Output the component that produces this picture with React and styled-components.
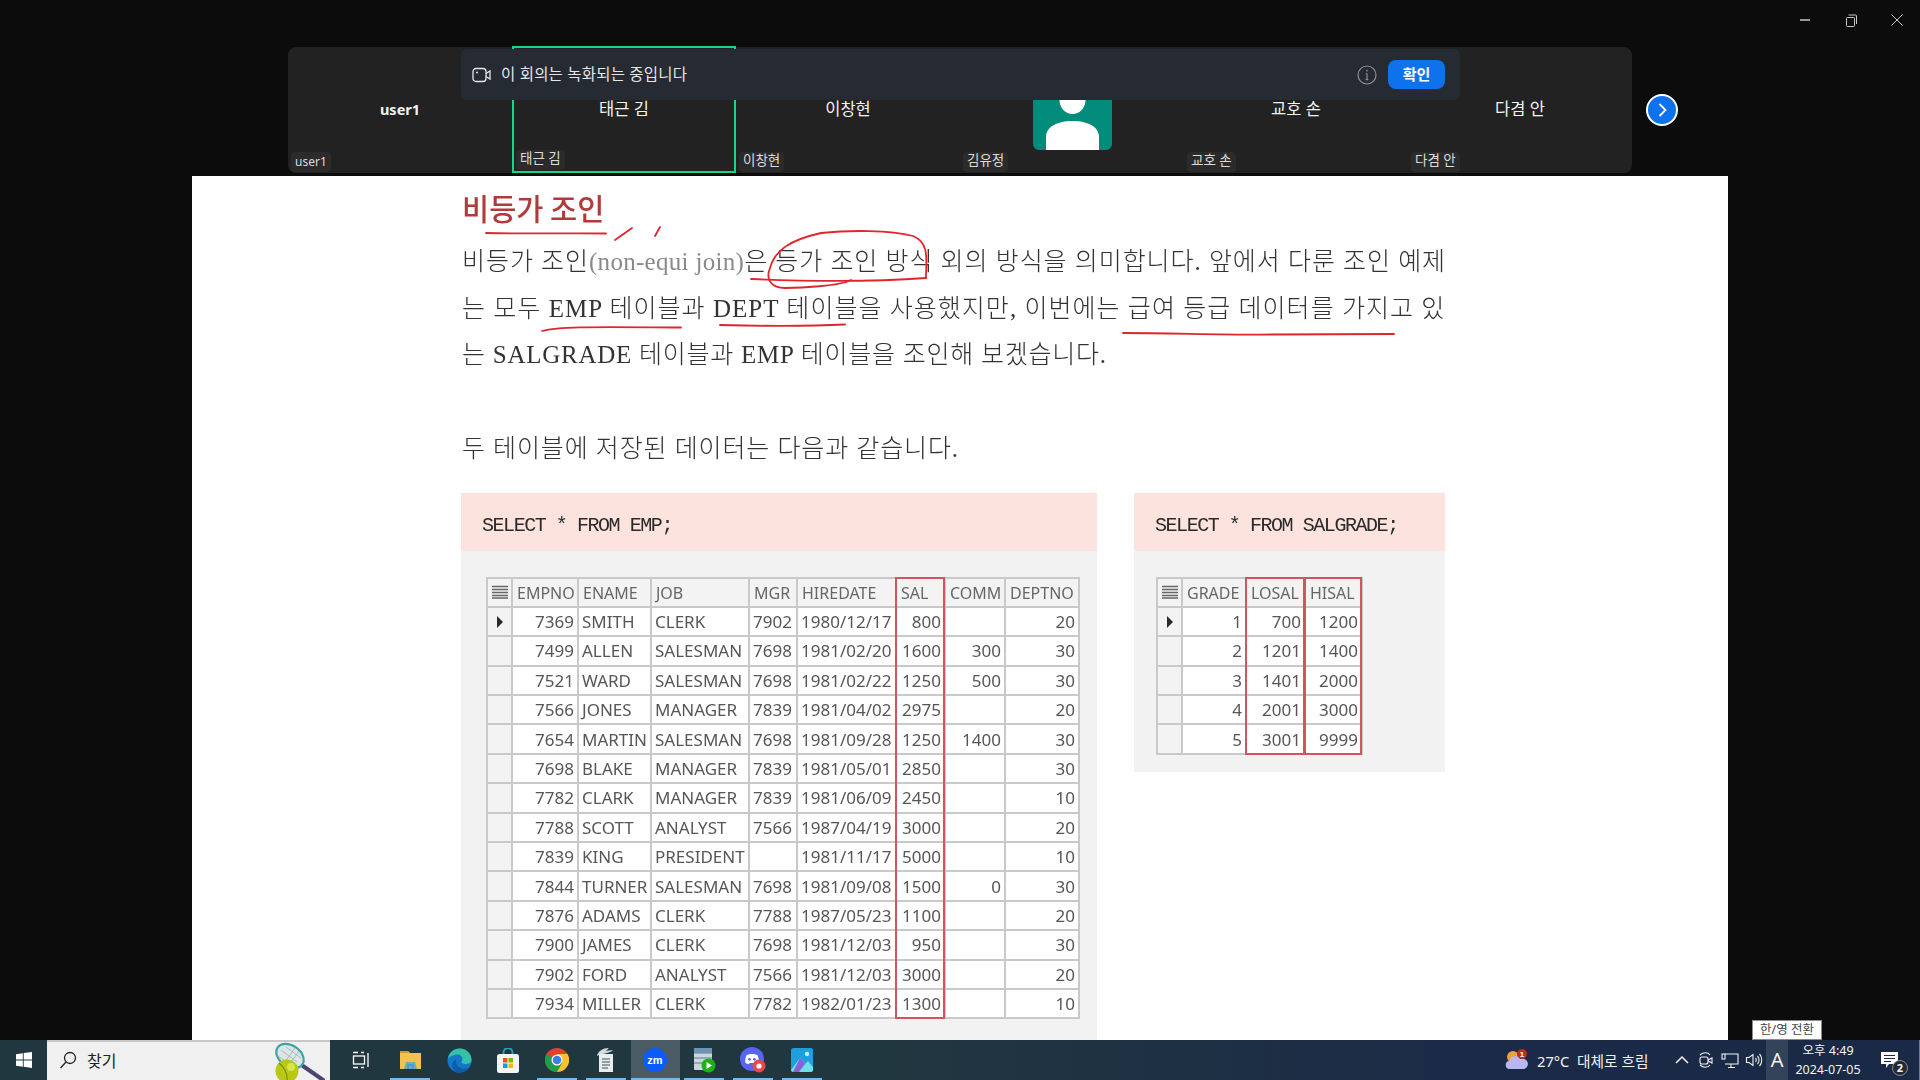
import React from "react";
import styled, { createGlobalStyle } from "styled-components";

const GlobalStyle = createGlobalStyle`
  html, body {
    margin: 0;
    padding: 0;
    background: #0c0c0c;
    overflow: hidden;
  }
  * {
    box-sizing: border-box;
  }
`;

const UI_FONT = `"Noto Sans", "Noto Sans CJK KR", sans-serif`;

const Screen = styled.div`
  width: 1920px;
  height: 1080px;
  display: flex;
  flex-direction: column;
  position: relative;
  overflow: hidden;
  background: #0c0c0c;
  font-family: ${UI_FONT};
`;

const TitleBar = styled.div`
  height: 47px;
  display: flex;
  justify-content: flex-end;
  align-items: flex-start;
`;

const WinButton = styled.div`
  width: 46px;
  height: 40px;
  display: flex;
  align-items: center;
  justify-content: center;
  color: #c8c8c8;
`;

const StageRow = styled.div`
  height: 126px;
  padding-left: 288px;
  display: flex;
  align-items: center;
  gap: 14px;
`;

const Strip = styled.div`
  position: relative;
  width: 1344px;
  height: 126px;
  display: grid;
  grid-template-columns: repeat(6, 224px);
  background: #222222;
  border-radius: 8px;
`;

const Tile = styled.div`
  position: relative;
  display: flex;
  justify-content: center;
  padding-top: ${(p) => (p.$active ? "49px" : "50px")};
  margin-top: ${(p) => (p.$active ? "-1px" : "0")};
  border: ${(p) => (p.$active ? "2px solid #12d98a" : "none")};
  align-items: ${(p) => (p.$avatar ? "center" : "flex-start")};
  ${(p) => p.$avatar && "padding-top: 0;"}
`;

const TileName = styled.div`
  color: #f2f2f2;
  font-size: ${(p) => (p.$bold ? "14.5px" : "16.5px")};
  line-height: 24px;
  font-weight: ${(p) => (p.$bold ? 700 : 400)};
`;

const TileLabel = styled.div`
  position: absolute;
  left: ${(p) => (p.$active ? "2px" : "3px")};
  bottom: 1px;
  height: 20px;
  padding: 0 4px;
  border-radius: 4px;
  background: #2b2b2b;
  color: #dcdcdc;
  font-size: ${(p) => (p.$latin ? "12px" : "13.5px")};
  line-height: ${(p) => (p.$latin ? "20px" : "17px")};
`;

const Avatar = styled.div`
  width: 79px;
  height: 79px;
  border-radius: 6px;
  overflow: hidden;
  background: #008b7b;
  display: flex;
`;

const Banner = styled.div`
  position: absolute;
  z-index: 3;
  left: 173px;
  right: 172px;
  top: 2px;
  height: 51px;
  padding: 0 15px 0 11px;
  display: flex;
  align-items: center;
  border-radius: 6px;
  background: #252a33;
  color: #e4e6ea;
  font-size: 15.5px;
`;

const BannerText = styled.span`
  margin: -2px 0 0 9px;
  flex: 1;
  letter-spacing: 0.2px;
`;

const ConfirmButton = styled.div`
  width: 57px;
  height: 29px;
  margin-left: 11px;
  border-radius: 8px;
  background: #0e72ed;
  color: #ffffff;
  font-size: 15px;
  font-weight: 700;
  line-height: 29px;
  text-align: center;
`;

const NextButton = styled.div`
  width: 32px;
  height: 32px;
  border-radius: 50%;
  border: 2px solid #ffffff;
  background: #0e72ed;
  display: flex;
  align-items: center;
  justify-content: center;
  color: #ffffff;
`;

const Page = styled.main`
  position: relative;
  width: 1536px;
  height: 864px;
  margin: 3px 0 0 192px;
  padding: 8px 0 0 269px;
  background: #ffffff;
  overflow: hidden;
  filter: blur(0.55px);
`;

const Heading = styled.h2`
  margin: 0 0 9px 1px;
  color: #b23a3a;
  font-size: 29.5px;
  line-height: 46px;
  font-weight: 500;
  font-family: "Noto Sans CJK KR", sans-serif;
`;

const Paragraph = styled.p`
  margin: 0 0 ${(p) => p.$after || "0"} 1px;
  color: #333333;
  font-family: "Liberation Serif", "Noto Sans CJK KR", serif;
  font-size: 25px;
  font-weight: 300;
  line-height: 46.7px;
`;

const Line = styled.span`
  display: block;
  white-space: nowrap;
  letter-spacing: ${(p) => p.$spacing || "0"};
`;

const Aside = styled.span`
  color: #8a8a8a;
  font-size: 25px;
  letter-spacing: 0.3px;
`;

const PanelRow = styled.div`
  display: flex;
  gap: 37px;
  align-items: flex-start;
`;

const Panel = styled.section`
  width: ${(p) => p.$width}px;
  height: ${(p) => p.$height}px;
  background: #f2f2f3;
  flex: none;
`;

const PanelHead = styled.div`
  height: 58px;
  padding-left: 21px;
  background: #fce3de;
  color: #2a2a2a;
  font-family: "Liberation Mono", monospace;
  font-size: 20px;
  letter-spacing: -1.45px;
  line-height: 66px;
`;

const TableWrap = styled.div`
  position: relative;
  width: ${(p) => p.$width}px;
  margin: 26px 0 0 ${(p) => p.$left}px;
`;

const Grid = styled.table`
  width: 100%;
  table-layout: fixed;
  border-collapse: collapse;
  background: #ffffff;
  color: #565656;
  font-family: "Noto Sans", sans-serif;
  font-size: 17px;
`;

const Cell = styled.td`
  height: 29.4px;
  padding: 1px 3px 0;
  border: 2px solid #c9c9c9;
  line-height: 24px;
  white-space: nowrap;
  overflow: hidden;
  text-align: ${(p) => (p.$right ? "right" : "left")};
`;

const HeadCell = styled(Cell).attrs({ as: "th" })`
  background: #f3f3f3;
  font-weight: 400;
  font-size: 16px;
  color: #666666;
  padding-left: 4px;
`;

const MarkerCell = styled(Cell)`
  background: #f3f3f3;
  padding: 0;
  text-align: center;
`;

const ColumnFrame = styled.div`
  position: absolute;
  top: 0;
  bottom: 0;
  border: 2px solid #cf5660;
  pointer-events: none;
`;

const Scribbles = styled.svg`
  position: absolute;
  inset: 0;
  pointer-events: none;
`;

const Taskbar = styled.footer`
  height: 40px;
  display: flex;
  align-items: stretch;
  background: linear-gradient(90deg, #21373f 0%, #21373f 45%, #1b2b47 75%, #1a2a46 100%);
  color: #f2f2f2;
`;

const StartButton = styled.div`
  width: 48px;
  display: flex;
  align-items: center;
  justify-content: center;
`;

const SearchBox = styled.div`
  position: relative;
  width: 288px;
  display: flex;
  align-items: center;
  gap: 10px;
  padding: 0 0 2px 12px;
  background: #f0f0f0;
  border-top: 2px solid #c8c8c8;
  color: #222222;
  font-size: 16px;
`;

const Mascot = styled.svg`
  position: absolute;
  left: 224px;
  top: 0;
`;

const TaskList = styled.div`
  display: flex;
  width: 539px;
  padding-left: 7px;
`;

const TaskItem = styled.div`
  position: relative;
  width: 49px;
  display: flex;
  align-items: center;
  justify-content: center;
  background: ${(p) => (p.$active ? "#4b5b63" : "transparent")};
  &::after {
    content: "";
    position: absolute;
    left: ${(p) => (p.$active ? "0" : "4px")};
    right: ${(p) => (p.$active ? "0" : "5px")};
    bottom: 0;
    height: 2px;
    background: ${(p) => (p.$running ? "#76b9ed" : "transparent")};
  }
`;

const Tray = styled.div`
  flex: 1;
  display: flex;
  align-items: center;
  padding-left: 646px;
`;

const Weather = styled.div`
  display: flex;
  align-items: center;
  gap: 8px;
  width: 165px;
  font-size: 14.7px;
  white-space: nowrap;
`;

const TrayIcon = styled.div`
  width: 24px;
  height: 40px;
  display: flex;
  align-items: center;
  justify-content: center;
`;

const ImeButton = styled.div`
  width: 22px;
  height: 40px;
  margin-left: 0;
  background: #33435a;
  font-size: 20px;
  line-height: 40px;
  text-align: center;
`;

const Clock = styled.div`
  width: 80px;
  text-align: center;
  font-size: 12.5px;
  line-height: 19px;
`;

const Notify = styled.div`
  position: relative;
  margin-left: 12px;
  width: 24px;
  height: 40px;
  display: flex;
  align-items: center;
`;

const NotifyBadge = styled.div`
  position: absolute;
  left: 12px;
  top: 20px;
  width: 16px;
  height: 16px;
  border-radius: 50%;
  border: 1px solid #888888;
  background: #222a33;
  font-size: 11px;
  font-weight: 700;
  line-height: 14px;
  text-align: center;
`;

const TrayEdge = styled.div`
  width: 1px;
  height: 40px;
  margin-left: 15px;
  background: #6d7a8c;
`;

const ImeTip = styled.div`
  position: absolute;
  left: 1752px;
  top: 1020px;
  width: 70px;
  height: 20px;
  border: 1px solid #8a8a8a;
  background: #ffffff;
  color: #444444;
  font-size: 12.5px;
  line-height: 18px;
  text-align: center;
  white-space: nowrap;
`;

const tiles = [
  { name: "user1", bold: true },
  { name: "태근 김", active: true },
  { name: "이창현" },
  { name: "김유정", avatar: true },
  { name: "교호 손" },
  { name: "다겸 안" },
];

const empColumns = [
  ["EMPNO", 66, true],
  ["ENAME", 73],
  ["JOB", 98],
  ["MGR", 48],
  ["HIREDATE", 99],
  ["SAL", 49, true],
  ["COMM", 60, true],
  ["DEPTNO", 74, true],
];

const empRows = [
  ["7369", "SMITH", "CLERK", "7902", "1980/12/17", "800", "", "20"],
  ["7499", "ALLEN", "SALESMAN", "7698", "1981/02/20", "1600", "300", "30"],
  ["7521", "WARD", "SALESMAN", "7698", "1981/02/22", "1250", "500", "30"],
  ["7566", "JONES", "MANAGER", "7839", "1981/04/02", "2975", "", "20"],
  ["7654", "MARTIN", "SALESMAN", "7698", "1981/09/28", "1250", "1400", "30"],
  ["7698", "BLAKE", "MANAGER", "7839", "1981/05/01", "2850", "", "30"],
  ["7782", "CLARK", "MANAGER", "7839", "1981/06/09", "2450", "", "10"],
  ["7788", "SCOTT", "ANALYST", "7566", "1987/04/19", "3000", "", "20"],
  ["7839", "KING", "PRESIDENT", "", "1981/11/17", "5000", "", "10"],
  ["7844", "TURNER", "SALESMAN", "7698", "1981/09/08", "1500", "0", "30"],
  ["7876", "ADAMS", "CLERK", "7788", "1987/05/23", "1100", "", "20"],
  ["7900", "JAMES", "CLERK", "7698", "1981/12/03", "950", "", "30"],
  ["7902", "FORD", "ANALYST", "7566", "1981/12/03", "3000", "", "20"],
  ["7934", "MILLER", "CLERK", "7782", "1982/01/23", "1300", "", "10"],
];

const gradeColumns = [
  ["GRADE", 64, true],
  ["LOSAL", 59, true],
  ["HISAL", 57, true],
];

const gradeRows = [
  ["1", "700", "1200"],
  ["2", "1201", "1400"],
  ["3", "1401", "2000"],
  ["4", "2001", "3000"],
  ["5", "3001", "9999"],
];

const MARKER_WIDTH = 25;

const ListGlyph = () => (
  <svg width="18" height="14" viewBox="0 0 18 14" style={{ display: "block", margin: "auto" }}>
    <path d="M1 1.5h16M1 4.5h16M1 7.5h16M1 10.5h16M1 13h16" stroke="#666" strokeWidth="1.6" />
  </svg>
);

const RowArrow = () => (
  <svg width="8" height="14" viewBox="0 0 8 14" style={{ display: "block", margin: "auto" }}>
    <path d="M1 1l6 6-6 6z" fill="#2a2a2a" />
  </svg>
);

function DataGrid({ columns, rows, frames }) {
  const total = MARKER_WIDTH + columns.reduce((sum, c) => sum + c[1], 0);
  return (
    <TableWrap $width={total} $left={frames.left}>
      <Grid>
        <colgroup>
          <col style={{ width: MARKER_WIDTH }} />
          {columns.map((c) => (
            <col key={c[0]} style={{ width: c[1] }} />
          ))}
        </colgroup>
        <thead>
          <tr>
            <HeadCell style={{ padding: 0 }}>
              <ListGlyph />
            </HeadCell>
            {columns.map((c) => (
              <HeadCell key={c[0]}>{c[0]}</HeadCell>
            ))}
          </tr>
        </thead>
        <tbody>
          {rows.map((row, i) => (
            <tr key={row[0]}>
              <MarkerCell>{i === 0 && <RowArrow />}</MarkerCell>
              {row.map((value, j) => (
                <Cell key={columns[j][0]} $right={columns[j][2]}>
                  {value}
                </Cell>
              ))}
            </tr>
          ))}
        </tbody>
      </Grid>
      {frames.names.map((name) => {
        const index = columns.findIndex((c) => c[0] === name);
        const left = MARKER_WIDTH + columns.slice(0, index).reduce((sum, c) => sum + c[1], 0);
        return <ColumnFrame key={name} style={{ left, width: columns[index][1] + 1 }} />;
      })}
    </TableWrap>
  );
}

const VideoIcon = () => (
  <svg width="20" height="16" viewBox="0 0 20 16" fill="none" stroke="#e6e6e6" strokeWidth="1.3">
    <rect x="1" y="1.5" width="13" height="13" rx="3" />
    <circle cx="5" cy="5.5" r="1" fill="#e6e6e6" stroke="none" />
    <path d="M14 6.5l4-2.5v8l-4-2.5" />
  </svg>
);

const InfoIcon = () => (
  <svg width="20" height="20" viewBox="0 0 20 20" fill="none" stroke="#8b8f96" strokeWidth="1.2">
    <circle cx="10" cy="10" r="9" />
    <path d="M10 8.5v6M8.6 14.6h2.8M8.8 8.5H10" />
    <circle cx="10" cy="5.6" r="0.9" fill="#8b8f96" stroke="none" />
  </svg>
);

const PersonArt = () => (
  <svg width="79" height="79" viewBox="0 0 79 79">
    <ellipse cx="39.5" cy="29" rx="13" ry="14" fill="#fff" />
    <path d="M13 79V66c0-10 11-16 26.500-16S66 56 66 66v13z" fill="#fff" />
  </svg>
);

const WindowsLogo = () => (
  <svg width="16" height="16" viewBox="0 0 16 16" fill="#fff">
    <path d="M0 2.300l6.800-1v6.300H0zM7.700 1.100L16 0v7.600H7.700zM0 8.500h6.800v6.300L0 13.800zM7.700 8.500H16V16l-8.300-1.200z" />
  </svg>
);

const SearchGlass = () => (
  <svg width="18" height="18" viewBox="0 0 18 18" fill="none" stroke="#222" strokeWidth="1.300">
    <circle cx="11" cy="7" r="5.500" />
    <path d="M7 11l-5.500 6" />
  </svg>
);

const RacketArt = () => (
  <Mascot width="56" height="40" viewBox="0 0 56 40">
    <path d="M32 24l20 14" stroke="#4d4470" strokeWidth="4" strokeLinecap="round" />
    <ellipse cx="19" cy="14" rx="15" ry="10.500" transform="rotate(35 19 14)" fill="#dbe6e6" stroke="#3fa3a8" strokeWidth="2.200" />
    <path d="M10 8l16 12M15 5l15 11M7 14l14 10M14 20l10-14M19 22L28 9" stroke="#9fb2b5" strokeWidth="0.800" />
    <circle cx="16" cy="29" r="11.500" fill="#b8c814" />
    <path d="M8 21c6 5 9 11 8 19" fill="none" stroke="#7d8c0a" strokeWidth="1.200" />
    <circle cx="20" cy="25" r="4" fill="#d9e64a" />
  </Mascot>
);

const TaskViewIcon = () => (
  <svg width="20" height="20" viewBox="0 0 20 20" fill="none" stroke="#fff" strokeWidth="1.300">
    <rect x="2.500" y="6" width="11" height="8" />
    <path d="M2 2.500h5M10 2.500h3M2 17.500h5M10 17.500h3M17 3v14" />
  </svg>
);

const FolderIcon = () => (
  <svg width="23" height="20" viewBox="0 0 23 20">
    <path d="M1 1h8l2 2h11v16H1z" fill="#f2c14e" />
    <path d="M1 1h8l2 2H1z" fill="#d9952a" />
    <path d="M8 19v-5h7v5h-2v-3h-3v3z" fill="#3b8fc9" />
    <path d="M5 19l2-7h9l2 7z" fill="#4aa3df" opacity="0.75" />
  </svg>
);

const EdgeIcon = () => (
  <svg width="25" height="25" viewBox="0 0 25 25">
    <circle cx="12.500" cy="12.500" r="12" fill="#1478c8" />
    <path d="M1 11C2 4 7 .5 12.500.5 19 .5 24.500 5 24.500 12c0 3-3 4-6 4-2 0-4-.5-4-2 0-1 1-1.500 1-3 0-3-3-5-6-4.500C5 7 2 9 1 11z" fill="#35c1a6" />
    <path d="M9 24C4 20 4 13 9.500 11c-1.500 3 0 8 6 9.500 3 .7 5-.5 6-1.500-2.500 5-8 6.500-12.500 5.500z" fill="#0c5aa8" />
  </svg>
);

const StoreIcon = () => (
  <svg width="24" height="25" viewBox="0 0 24 25">
    <path d="M7.500 7V4.500a4.500 4.500 0 0 1 9 0V7" fill="none" stroke="#23a9c8" strokeWidth="1.800" />
    <rect x="1" y="6" width="22" height="19" rx="2.500" fill="#f4f4f4" />
    <rect x="7" y="10" width="4.500" height="4.500" fill="#f25022" />
    <rect x="12.500" y="10" width="4.500" height="4.500" fill="#7fba00" />
    <rect x="7" y="15.500" width="4.500" height="4.500" fill="#00a4ef" />
    <rect x="12.500" y="15.500" width="4.500" height="4.500" fill="#ffb900" />
  </svg>
);

const ChromeIcon = () => (
  <svg width="24" height="24" viewBox="0 0 24 24">
    <circle cx="12" cy="12" r="12" fill="#e3402f" />
    <path d="M12 12L1.600 6A12 12 0 0 0 12 24l6-10.400z" fill="#1f9d4c" />
    <path d="M12 6h10.400A12 12 0 0 1 12 24l5.200-9z" fill="#fbc02d" />
    <circle cx="12" cy="12" r="5.500" fill="#fff" />
    <circle cx="12" cy="12" r="4.300" fill="#3d7fe6" />
  </svg>
);

const ScriptIcon = () => (
  <svg width="24" height="26" viewBox="0 0 24 26">
    <path d="M5 7h14v18H5z" fill="#e8eef0" />
    <path d="M8 12h8M8 15h8M8 18h8M8 21h6" stroke="#3e4f57" strokeWidth="1.200" />
    <path d="M3 9C4 4 9 1 15 1c-2 1.500-1 2-4 3 3 0 5-1 8-1-3 3-7 3-10 4-2 .5-4 1-6 2z" fill="#d5dcdf" />
  </svg>
);

const ZoomIcon = () => (
  <svg width="24" height="24" viewBox="0 0 24 24">
    <circle cx="12" cy="12" r="12" fill="#0b5cff" />
    <text x="12" y="16" textAnchor="middle" fill="#fff" fontSize="11" fontWeight="700" fontFamily="Liberation Sans, sans-serif">
      zm
    </text>
  </svg>
);

const ReportIcon = () => (
  <svg width="24" height="26" viewBox="0 0 24 26">
    <rect x="2" y="1" width="18" height="22" rx="1" fill="#c9d6de" />
    <path d="M2 6h18M2 11h18M2 16h18" stroke="#5e7d96" strokeWidth="1.200" />
    <rect x="2" y="1" width="18" height="5" fill="#6f93b0" />
    <circle cx="16.500" cy="18.500" r="7" fill="#19b313" />
    <path d="M14.500 15l5.500 3.500-5.500 3.500z" fill="#fff" />
  </svg>
);

const DiscordIcon = () => (
  <svg width="26" height="26" viewBox="0 0 26 26">
    <circle cx="12" cy="12" r="12" fill="#5865f2" />
    <path d="M6.500 8c3-1.500 8-1.500 11 0 1 2.500 1.500 5 1.300 7.500-1.300 1-2.600 1.500-3.600 1.700l-.8-1.300h-4.800l-.8 1.300c-1-.2-2.300-.7-3.600-1.700C5 13 5.500 10.500 6.500 8z" fill="#fff" />
    <circle cx="9.500" cy="12.300" r="1.400" fill="#5865f2" />
    <circle cx="14.500" cy="12.300" r="1.400" fill="#5865f2" />
    <circle cx="19" cy="19" r="6.500" fill="#e8474c" />
    <circle cx="19" cy="19" r="2.600" fill="#fff" />
  </svg>
);

const PhotosIcon = () => (
  <svg width="22" height="24" viewBox="0 0 22 24">
    <rect width="22" height="24" rx="2.500" fill="#1e9fe0" />
    <path d="M0 22l9-12 5 6 3-3 5 6v2.500a2.500 2.500 0 0 1-2.500 2.500h-17A2.500 2.500 0 0 1 0 21.500z" fill="#6fe0ea" />
    <path d="M9 10l5 6-6 8H2z" fill="#8d5fd8" />
    <circle cx="16" cy="6" r="2.200" fill="#bdf0f6" />
  </svg>
);

const CloudIcon = () => (
  <svg width="24" height="22" viewBox="0 0 24 22">
    <circle cx="8" cy="8" r="6" fill="#f0a040" />
    <path d="M5 20a4 4 0 0 1-.5-8 6 6 0 0 1 11-2 5 5 0 0 1 4 10z" fill="#b9b6f0" />
    <circle cx="17" cy="5" r="5" fill="#c42b1c" />
    <text x="17" y="8" textAnchor="middle" fill="#fff" fontSize="8" fontWeight="700" fontFamily="Liberation Sans, sans-serif">
      1
    </text>
  </svg>
);

const strokeProps = { fill: "none", stroke: "#f2f2f2", strokeWidth: 1.1 };

const ChevronIcon = () => (
  <svg width="14" height="8" viewBox="0 0 14 8" {...strokeProps} strokeWidth="1.500">
    <path d="M1 7l6-6 6 6" />
  </svg>
);

const CameraIcon = () => (
  <svg width="18" height="18" viewBox="0 0 18 18" {...strokeProps}>
    <path d="M3 4c3-3 8-3 10 0M3 14c3 3 8 3 10 0" />
    <rect x="3" y="6" width="8" height="7" rx="2" />
    <path d="M11 9l4-2v5l-4-2" />
  </svg>
);

const NetworkIcon = () => (
  <svg width="18" height="18" viewBox="0 0 18 18" {...strokeProps}>
    <path d="M4 3h13v10H4M10 13v3M7 16.500h7" />
    <rect x="1" y="3" width="3" height="5" />
  </svg>
);

const SpeakerIcon = () => (
  <svg width="18" height="18" viewBox="0 0 18 18" {...strokeProps}>
    <path d="M1.500 6.500h2.500L8 3.500v11l-4-3H1.500z" />
    <path d="M10.500 7c1 1 1 3 0 4M12.500 5c2 2 2 6 0 8M14.500 3c3 3 3 9 0 12" />
  </svg>
);

const NotifyIcon = () => (
  <svg width="20" height="18" viewBox="0 0 20 18">
    <path d="M1 1h17v12h-9l-3 4v-4H1z" fill="#fff" />
    <path d="M4 4.500h11M4 7.500h11M4 10.500h7" stroke="#1a2a46" strokeWidth="1" />
  </svg>
);

export default function App() {
  return (
    <Screen>
      <GlobalStyle />
      <TitleBar>
        <WinButton>
          <svg width="10" height="10" viewBox="0 0 10 10">
            <path d="M0 5h10" stroke="currentColor" strokeWidth="1.500" />
          </svg>
        </WinButton>
        <WinButton>
          <svg width="13" height="13" viewBox="0 0 13 13" fill="none" stroke="currentColor">
            <rect x="1.500" y="3.500" width="8" height="9" rx="1" />
            <path d="M3.500 1h7a1 1 0 0 1 1 1v8" />
          </svg>
        </WinButton>
        <WinButton>
          <svg width="12" height="12" viewBox="0 0 12 12" stroke="currentColor">
            <path d="M.5.500l11 11M11.500.500l-11 11" />
          </svg>
        </WinButton>
      </TitleBar>

      <StageRow>
        <Strip>
          {tiles.map((t) => (
            <Tile key={t.name} $active={t.active} $avatar={t.avatar}>
              {t.avatar ? (
                <Avatar>
                  <PersonArt />
                </Avatar>
              ) : (
                <TileName $bold={t.bold}>{t.name}</TileName>
              )}
              <TileLabel $active={t.active} $latin={t.bold}>
                {t.name}
              </TileLabel>
            </Tile>
          ))}
          <Banner>
            <VideoIcon />
            <BannerText>이 회의는 녹화되는 중입니다</BannerText>
            <InfoIcon />
            <ConfirmButton>확인</ConfirmButton>
          </Banner>
        </Strip>
        <NextButton>
          <svg width="14" height="16" viewBox="0 0 14 16" fill="none" stroke="currentColor" strokeWidth="1.800">
            <path d="M4.500 2l6 6-6 6" />
          </svg>
        </NextButton>
      </StageRow>

      <Page>
        <Heading>비등가 조인</Heading>
        <Paragraph $after="46.7px">
          <Line $spacing="0.95px">
            비등가 조인<Aside>(non-equi join)</Aside>은 등가 조인 방식 외의 방식을 의미합니다. 앞에서 다룬 조인 예제
          </Line>
          <Line $spacing="1.03px">는 모두 EMP 테이블과 DEPT 테이블을 사용했지만, 이번에는 급여 등급 데이터를 가지고 있</Line>
          <Line $spacing="0.75px">는 SALGRADE 테이블과 EMP 테이블을 조인해 보겠습니다.</Line>
        </Paragraph>
        <Paragraph $after="20px">
          <Line $spacing="0.9px">두 테이블에 저장된 데이터는 다음과 같습니다.</Line>
        </Paragraph>
        <PanelRow>
          <Panel $width={636} $height={560}>
            <PanelHead>SELECT * FROM EMP;</PanelHead>
            <DataGrid columns={empColumns} rows={empRows} frames={{ left: 25, names: ["SAL"] }} />
          </Panel>
          <Panel $width={311} $height={279}>
            <PanelHead>SELECT * FROM SALGRADE;</PanelHead>
            <DataGrid columns={gradeColumns} rows={gradeRows} frames={{ left: 22, names: ["LOSAL", "HISAL"] }} />
          </Panel>
        </PanelRow>
        <Scribbles width="1536" height="864" viewBox="192 176 1536 864" fill="none" stroke="#e0262c" strokeWidth="1.800" strokeLinecap="round">
          <path d="M486 233c40 1 80 0 120 .5" />
          <path d="M615 240l17-12M655 236l5-9" />
          <path d="M851 280c-11 6-51 8-66 8-13 0-20-8-15-20 5-18 20-28 51-35 29-3 69-3 92 3 17 7 13 24 13 42" />
          <path d="M751 279c49 2 119 3 175-1" />
          <path d="M542 331c18-5 58-4 139-3.500" />
          <path d="M720 325c40 1 85 1.500 125-.5" />
          <path d="M1123 333c50 0 100 2 150 1.500 40 0 80 0 121-.5" />
        </Scribbles>
      </Page>

      <Taskbar>
        <StartButton>
          <WindowsLogo />
        </StartButton>
        <SearchBox>
          <SearchGlass />
          찾기
          <RacketArt />
        </SearchBox>
        <TaskList>
          <TaskItem>
            <TaskViewIcon />
          </TaskItem>
          <TaskItem $running>
            <FolderIcon />
          </TaskItem>
          <TaskItem>
            <EdgeIcon />
          </TaskItem>
          <TaskItem>
            <StoreIcon />
          </TaskItem>
          <TaskItem $running>
            <ChromeIcon />
          </TaskItem>
          <TaskItem $running>
            <ScriptIcon />
          </TaskItem>
          <TaskItem $running $active>
            <ZoomIcon />
          </TaskItem>
          <TaskItem $running>
            <ReportIcon />
          </TaskItem>
          <TaskItem $running>
            <DiscordIcon />
          </TaskItem>
          <TaskItem $running>
            <PhotosIcon />
          </TaskItem>
        </TaskList>
        <Tray>
          <Weather>
            <CloudIcon />
            27°C&nbsp; 대체로 흐림
          </Weather>
          <TrayIcon>
            <ChevronIcon />
          </TrayIcon>
          <TrayIcon>
            <CameraIcon />
          </TrayIcon>
          <TrayIcon>
            <NetworkIcon />
          </TrayIcon>
          <TrayIcon>
            <SpeakerIcon />
          </TrayIcon>
          <ImeButton>A</ImeButton>
          <Clock>
            오후 4:49
            <br />
            2024-07-05
          </Clock>
          <Notify>
            <NotifyIcon />
            <NotifyBadge>2</NotifyBadge>
          </Notify>
          <TrayEdge />
        </Tray>
      </Taskbar>
      <ImeTip>한/영 전환</ImeTip>
    </Screen>
  );
}
